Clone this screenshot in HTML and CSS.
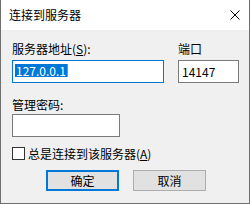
FILE: index.html
```html
<html>
<head>
	<meta charset="utf-8">
	<link rel="stylesheet" href="styles.css">
</head>
<body>
<div class="window">
	<div class="titlebar">
		<span class="title">连接到服务器</span>
		<svg class="close" width="10" height="10" viewBox="0 0 10 10">
			<path d="M0.5 0.5 L9.5 9.5 M9.5 0.5 L0.5 9.5" stroke="#000" stroke-width="1" fill="none"/>
		</svg>
	</div>
	<div class="content">
		<div class="row">
			<div class="host">
				<div class="label">服务器地址(<u>S</u>):</div>
				<div class="field focus"><span class="sel">127.0.0.1</span><span class="caret"></span></div>
			</div>
			<div class="port">
				<div class="label">端口</div>
				<div class="field">14147</div>
			</div>
		</div>
		<div class="pass">
			<div class="label">管理密码:</div>
			<div class="field"></div>
		</div>
		<div class="check">
			<span class="box"></span>
			<span>总是连接到该服务器(<u>A</u>)</span>
		</div>
		<div class="buttons">
			<div class="btn default">确定</div>
			<div class="btn">取消</div>
		</div>
	</div>
</div>
</body>
</html>
```
FILE: styles.css
```css
body {
	margin: 0;
	font-family: "Noto Sans CJK SC", sans-serif;
	font-size: 12px;
	color: #000;
}
.window {
	width: 250px;
	height: 204px;
	box-sizing: border-box;
	border: 1px solid #6f6f6f;
	border-top: none;
	background: #f0f0f0;
}
.titlebar {
	display: flex;
	align-items: center;
	height: 30px;
	background: #fff;
	padding-left: 8px;
	padding-right: 9px;
}
.title {
	line-height: 30px;
}
.close {
	margin-left: auto;
}
.content {
	padding: 11px 0 0 11px;
}
.row {
	display: flex;
	gap: 14px;
}
.host {
	width: 152px;
}
.port {
	width: 61px;
}
.label {
	line-height: 16px;
	margin-bottom: 3px;
}
.field {
	height: 23px;
	box-sizing: border-box;
	border: 1px solid #7a7a7a;
	background: #fff;
	padding: 3px 3px 0 3px;
	line-height: 15px;
}
.field.focus {
	border-color: #0078d7;
	padding-left: 2px;
	display: flex;
}
.sel {
	display: inline-block;
	height: 13px;
	line-height: 13px;
	background: #0078d7;
	color: #fff;
	padding: 0 1px;
}
.caret {
	display: inline-block;
	width: 1px;
	height: 13px;
	background: #d9782d;
}
.pass {
	width: 108px;
	margin-top: 14px;
}
.pass .label {
	margin-bottom: 1px;
}
.check {
	display: flex;
	align-items: center;
	height: 13px;
	margin-top: 10px;
	gap: 3px;
	line-height: 13px;
}
.box {
	width: 13px;
	height: 13px;
	box-sizing: border-box;
	border: 1px solid #333;
	background: #fff;
}
.buttons {
	display: flex;
	gap: 14px;
	margin-top: 10px;
	margin-left: 34px;
}
.btn {
	width: 73px;
	height: 21px;
	box-sizing: border-box;
	border: 1px solid #adadad;
	background: #e1e1e1;
	text-align: center;
	line-height: 19px;
}
.btn.default {
	border: 2px solid #0078d7;
	line-height: 17px;
}
```
